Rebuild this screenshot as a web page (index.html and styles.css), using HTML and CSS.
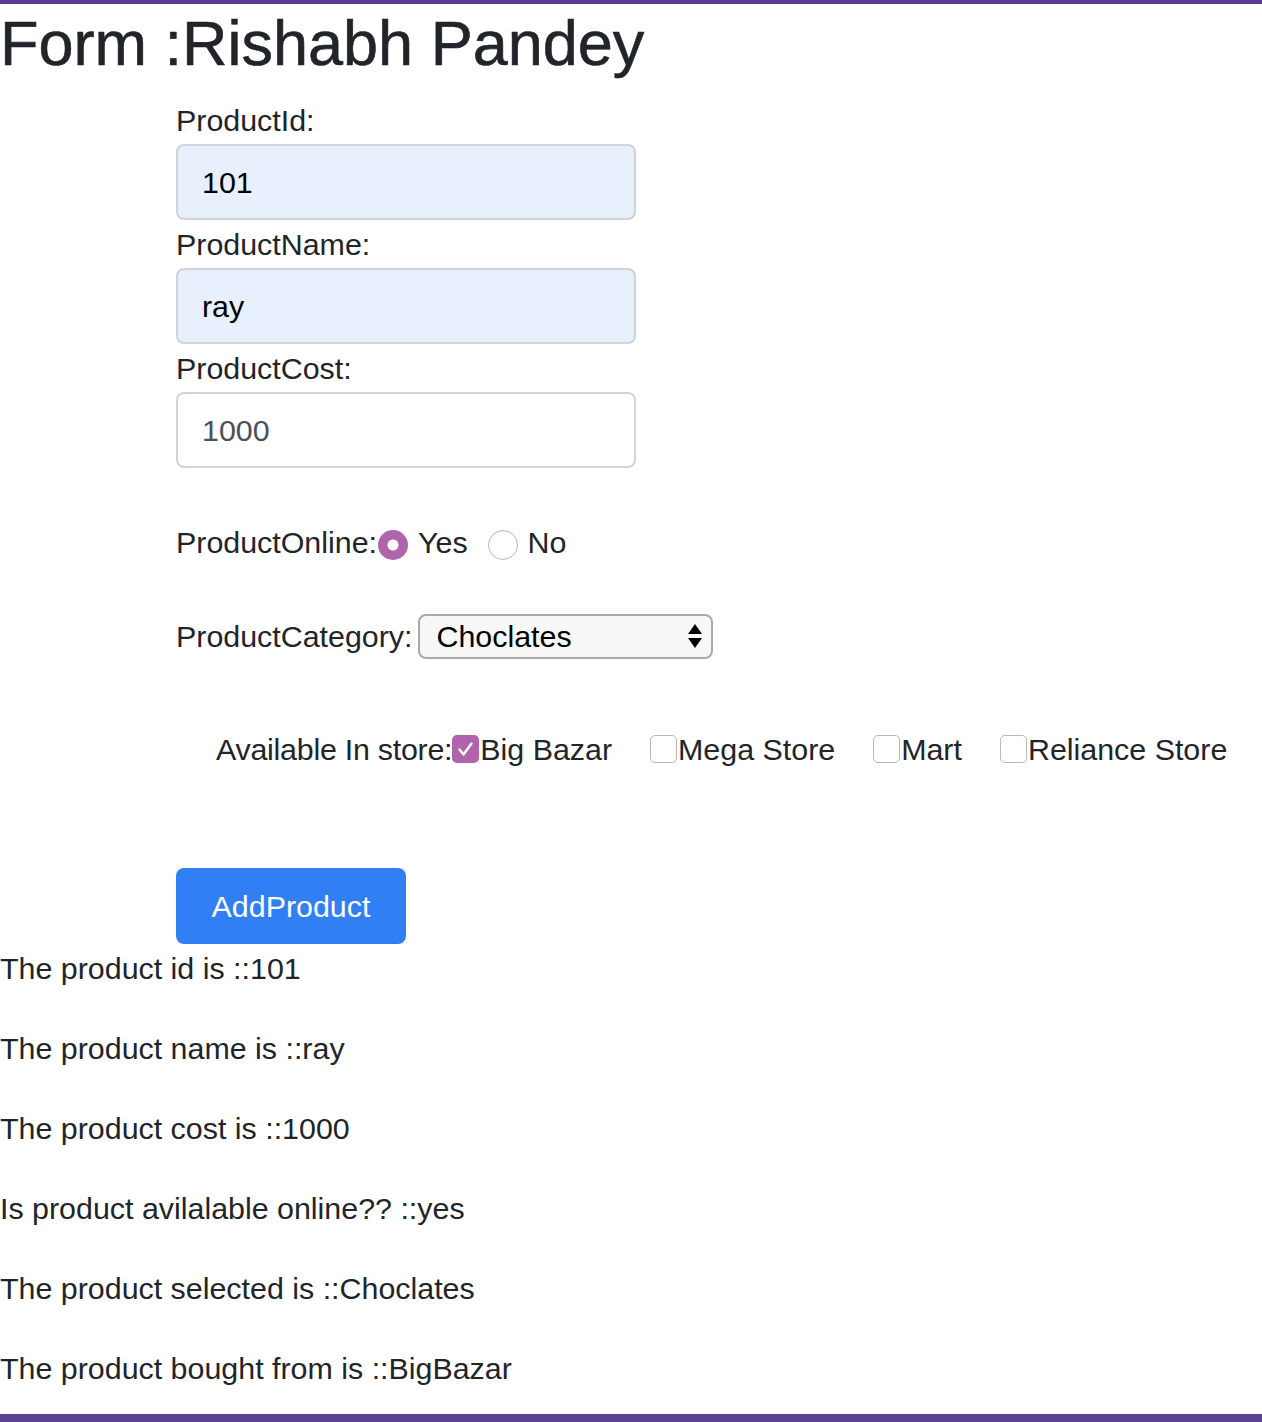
FILE: index.html
```html
<!DOCTYPE html>
<html lang="en">
<head>
<meta charset="utf-8">
<title>Form</title>
<link rel="stylesheet" href="styles.css">
</head>
<body>
<h2 class="title">Form :Rishabh Pandey</h2>
<form class="form">
  <div class="field">
    <label class="label">ProductId:</label>
    <input class="input input-filled" type="text" value="101">
  </div>
  <div class="field">
    <label class="label">ProductName:</label>
    <input class="input input-filled" type="text" value="ray">
  </div>
  <div class="field">
    <label class="label">ProductCost:</label>
    <input class="input" type="text" value="1000">
  </div>

  <div class="online">
    <span class="online-label">ProductOnline:</span>
    <span class="radio radio-on"></span>
    <span class="radio-text">Yes</span>
    <span class="radio radio-off"></span>
    <span class="radio-text">No</span>
  </div>

  <div class="category">
    <span>ProductCategory:</span>
    <div class="select">
      <span>Choclates</span>
      <svg class="select-arrows" width="14" height="25" viewBox="0 0 14 25">
        <path d="M7 0 L14 10 L0 10 Z" fill="#000"/>
        <path d="M0 14 L14 14 L7 24 Z" fill="#000"/>
      </svg>
    </div>
  </div>

  <div class="stores">
    <span class="stores-label">Available In store:</span>
    <div class="store-list">
      <span class="store"><span class="box box-on"><svg width="27" height="28" viewBox="0 0 27 28"><path d="M7.5 14.5 L11.5 19.5 L19.5 8.5" fill="none" stroke="#fff" stroke-width="2.4" stroke-linecap="round" stroke-linejoin="round"/></svg></span>Big Bazar</span>
      <span class="store"><span class="box"></span>Mega Store</span>
      <span class="store"><span class="box"></span>Mart</span>
      <span class="store"><span class="box"></span>Reliance Store</span>
    </div>
  </div>

  <button class="btn" type="button">AddProduct</button>
</form>

<div class="out">
  <p>The product id is ::101</p>
  <p>The product name is ::ray</p>
  <p>The product cost is ::1000</p>
  <p>Is product avilalable online?? ::yes</p>
  <p>The product selected is ::Choclates</p>
  <p>The product bought from is ::BigBazar</p>
</div>
</body>
</html>
```

FILE: styles.css
```css
html {
  margin: 0;
}

body {
  margin: 0;
  min-height: 100vh;
  box-sizing: border-box;
  border-top: 4px solid #583e8a;
  border-bottom: 8px solid #5d4392;
  font-family: "Liberation Sans", Arial, sans-serif;
  font-size: 30.4px;
  line-height: 48px;
  color: #212529;
  background: #fff;
}

.title {
  margin: 2px 0 16px;
  font-size: 63px;
  line-height: 74px;
  font-weight: 400;
  color: #212529;
  -webkit-text-stroke: 0.6px #212529;
}

.form {
  padding-left: 176px;
}

.label {
  display: block;
  line-height: 48px;
}

.input {
  display: block;
  box-sizing: border-box;
  width: 460px;
  height: 76px;
  margin: 0;
  padding: 0 24px;
  border: 2px solid #ced4da;
  border-radius: 8px;
  font: inherit;
  color: #495057;
  background: #fff;
  outline: none;
}

.input-filled {
  background: #e8f0fe;
  color: #000;
}

.online {
  margin-top: 50px;
  display: flex;
  align-items: center;
}

.online-label {
  margin-right: 1px;
}

.radio {
  width: 30px;
  height: 30px;
  box-sizing: border-box;
  border-radius: 50%;
  margin-top: 5px;
  flex: none;
}

.radio-on {
  background: radial-gradient(circle, #fff 0 5px, #b064ad 6px);
}

.radio-off {
  border: 1.5px solid #b9b9b9;
  background: #fff;
  box-shadow: inset 0 1px 1px rgba(0, 0, 0, 0.06);
  margin-left: 20px;
}

.radio-text {
  margin-left: 10px;
}

.category {
  margin-top: 46px;
  display: flex;
  align-items: center;
}

.select {
  box-sizing: border-box;
  width: 295px;
  height: 45px;
  margin-left: 5px;
  padding: 0 9px 0 17px;
  border: 2px solid #a9a9a9;
  border-radius: 8px;
  background: #f7f7f7;
  color: #000;
  display: flex;
  align-items: center;
  justify-content: space-between;
}

.select-arrows {
  display: block;
}

.stores {
  margin-top: 65px;
  padding-left: 40px;
  display: flex;
  align-items: center;
}

.stores-label {
  letter-spacing: -0.25px;
}

.store-list {
  display: flex;
  align-items: center;
  gap: 38px;
}

.store {
  display: flex;
  align-items: center;
}

.box {
  width: 27px;
  height: 28px;
  box-sizing: border-box;
  border: 1.5px solid #b8b8b8;
  border-radius: 5px;
  background: #fff;
  margin-right: 1px;
  flex: none;
}

.box-on {
  border: 0;
  background: #b064ad;
}

.box-on svg {
  display: block;
}

.btn {
  display: block;
  margin-top: 95px;
  width: 230px;
  height: 76px;
  padding: 0;
  border: 0;
  border-radius: 8px;
  background: #307ff5;
  color: #fff;
  font: inherit;
  line-height: 48px;
}

.out p {
  margin: 0 0 32px;
}

.out p:last-child {
  margin-bottom: 0;
}
```
